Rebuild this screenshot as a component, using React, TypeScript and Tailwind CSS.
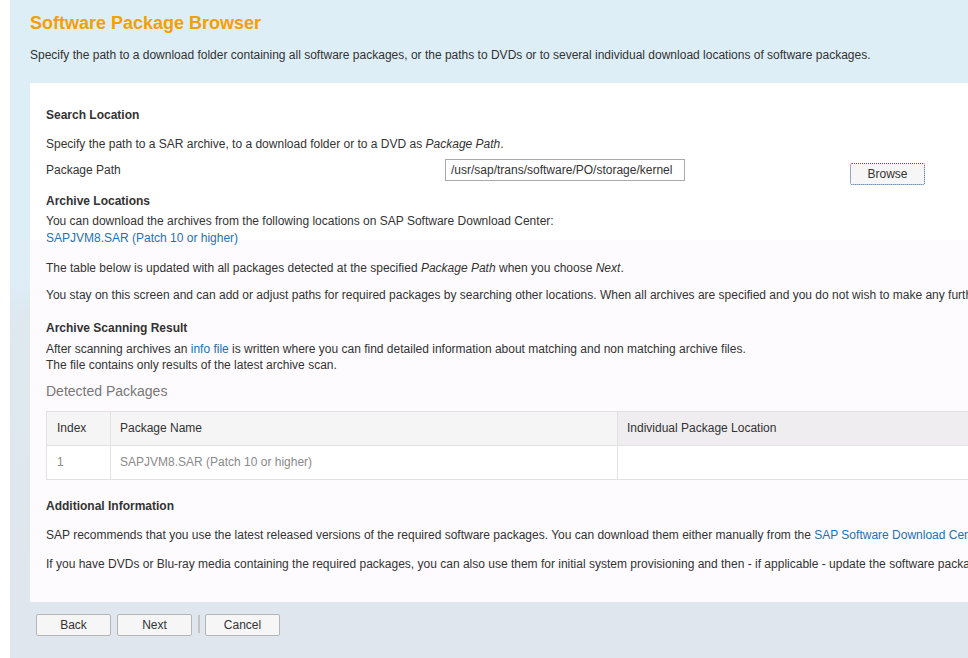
import React from "react";

const font = "font-['Liberation_Sans',Arial,sans-serif]";

function Btn({ label, focus }: { label: string; focus?: boolean }) {
  return (
    <button
      className={
        "h-[22px] w-[75px] rounded-[2px] bg-[#f6f6f6] text-[12px] text-[#333] leading-none " +
        (focus ? "border border-dotted border-[#2c5f8f]" : "border border-[#b5b5b5]")
      }
    >
      {label}
    </button>
  );
}

export default function App() {
  return (
    <div className={`${font} flex h-[658px] w-[968px] overflow-hidden bg-white text-[12px] text-[#333]`}>
      <div className="w-[10px] shrink-0 bg-white" />
      <div className="min-w-0 flex-1 bg-[linear-gradient(#ddeef7_0,#ddeef7_280px,#dfe7ef_320px,#dfe6ee_100%)] pl-[20px]">
        <h1 className="mt-[12px] text-[18px] font-bold leading-[22px] text-[#f5a000]">Software Package Browser</h1>
        <p className="mt-[13px] whitespace-nowrap leading-[16px]">
          Specify the path to a download folder containing all software packages, or the paths to DVDs or to several individual download locations of software packages.
        </p>

        <div className="mt-[20px] w-[1200px] bg-[linear-gradient(#fff_0,#fff_157px,#fdfbfe_157px)] pl-[16px] pb-[30px] pt-[24px] leading-[16px]">
          <div className="font-bold">Search Location</div>
          <div className="mt-[13px]">
            Specify the path to a SAR archive, to a download folder or to a DVD as <i>Package Path</i>.
          </div>
          <div className="mt-[7px] flex items-start">
            <div className="w-[399px] pt-[3px]">Package Path</div>
            <div className="flex h-[22px] w-[240px] items-center border border-[#aaa] bg-white px-[5px] text-[12px]">
              /usr/sap/trans/software/PO/storage/kernel
            </div>
            <div className="ml-[165px] mt-[4px]">
              <Btn label="Browse" focus />
            </div>
          </div>
          <div className="mt-[8px] font-bold">Archive Locations</div>
          <div className="mt-[4px]">You can download the archives from the following locations on SAP Software Download Center:</div>
          <div className="mt-[1px] text-[#2471b5]">SAPJVM8.SAR (Patch 10 or higher)</div>
          <div className="mt-[14px]">
            The table below is updated with all packages detected at the specified <i>Package Path</i> when you choose <i>Next</i>.
          </div>
          <div className="mt-[11px] whitespace-nowrap">
            You stay on this screen and can add or adjust paths for required packages by searching other locations. When all archives are specified and you do not wish to make any further changes, choose Next.
          </div>
          <div className="mt-[17px] font-bold">Archive Scanning Result</div>
          <div className="mt-[5px]">
            After scanning archives an <span className="text-[#2471b5]">info file</span> is written where you can find detailed information about matching and non matching archive files.
          </div>
          <div>The file contains only results of the latest archive scan.</div>
          <div className="mt-[9px] text-[14px] leading-[18px] text-[#777]">Detected Packages</div>

          <div className="mt-[11px] w-[1100px] border-l border-t border-[#e2e2e2]">
            <div className="flex h-[34px] border-b border-[#e2e2e2] bg-[#f5f5f5]">
              <div className="flex w-[64px] items-center border-r border-[#e2e2e2] pb-[1px] pl-[10px]">Index</div>
              <div className="flex w-[507px] items-center border-r border-[#e2e2e2] pb-[1px] pl-[9px]">Package Name</div>
              <div className="flex flex-1 items-center bg-[#efedef] pb-[1px] pl-[9px]">Individual Package Location</div>
            </div>
            <div className="flex h-[34px] border-b border-[#e2e2e2] bg-white text-[#8a8a8a]">
              <div className="flex w-[64px] items-center border-r border-[#e2e2e2] pb-[1px] pl-[10px]">1</div>
              <div className="flex w-[507px] items-center border-r border-[#e2e2e2] pb-[1px] pl-[9px]">SAPJVM8.SAR (Patch 10 or higher)</div>
              <div className="flex-1" />
            </div>
          </div>

          <div className="mt-[18px] font-bold">Additional Information</div>
          <div className="mt-[13px] whitespace-nowrap">
            SAP recommends that you use the latest released versions of the required software packages. You can download them either manually from the{" "}
            <span className="text-[#2471b5]">SAP Software Download Center</span> or by using the Maintenance Planner.
          </div>
          <div className="mt-[13px] whitespace-nowrap">
            If you have DVDs or Blu-ray media containing the required packages, you can also use them for initial system provisioning and then - if applicable - update the software packages.
          </div>
        </div>

        <div className="ml-[6px] mt-[12px] flex items-start">
          <Btn label="Back" />
          <div className="ml-[6px]">
            <Btn label="Next" />
          </div>
          <div className="ml-[6px] mt-[1px] h-[18px] w-[2px] bg-[#c4c4c4]" />
          <div className="ml-[5px]">
            <Btn label="Cancel" />
          </div>
        </div>
      </div>
    </div>
  );
}
